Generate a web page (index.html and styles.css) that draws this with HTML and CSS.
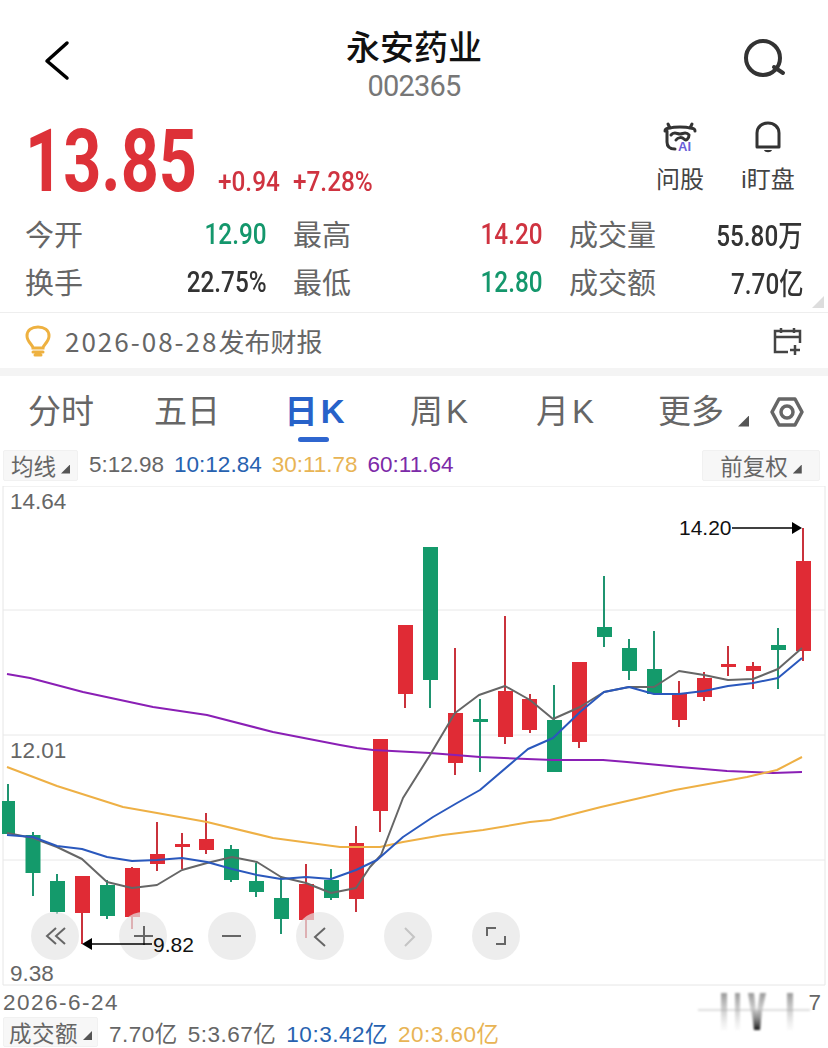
FILE: index.html
```html
<!DOCTYPE html>
<html lang="zh-CN">
<head>
    <meta charset="UTF-8">
    <meta name="viewport" content="width=device-width, initial-scale=1.0">
    <title>永安药业 002365</title>
    <link rel="stylesheet" href="styles.css">
</head>
<body>
    <!-- Top bar -->
    <header class="nav">
        <svg class="nav-icon" width="40" height="50" viewBox="0 0 40 50"><path class="ic-back" d="M27 8L7 26L27 43"/></svg>
        <div class="nav-title">
            <div class="stock-name">永安药业</div>
            <div class="stock-code">002365</div>
        </div>
        <svg class="nav-icon" width="44" height="44" viewBox="0 0 44 44"><circle class="ic-search" cx="20" cy="20" r="17"/><path class="ic-search" d="M31 29L40 35"/></svg>
    </header>

    <!-- Price -->
    <section class="quote">
        <div class="price">13.85</div>
        <div class="change change-abs">+0.94</div>
        <div class="change">+7.28%</div>
        <div class="quote-tools">
            <div class="tool">
                <svg width="36" height="34" viewBox="0 0 36 34">
                    <path class="ic-cow" d="M8 8C12 6.500 24 6.500 28 8M6 4L8 8M30 4L28 8M3 11C3 8 6 8 8 8M33 11C33 8 30 8 28 8M5 11V22C5 27 8 29 13 29"/>
                    <path class="ic-cow" d="M9 15C12 11 15 14 18 14C21 14 24 11 27 15C27 19 24 21 22 19C20 17 16 17 14 20"/>
                    <text class="ic-ai" x="16" y="31">AI</text>
                </svg>
                <span class="tool-label">问股</span>
            </div>
            <div class="tool">
                <svg width="36" height="34" viewBox="0 0 36 34">
                    <path class="ic-bell" d="M7 27V13C7 7 12 3 18 3C24 3 29 7 29 13V27Z"/>
                    <path class="ic-clapper" d="M14 30H22C21 33 15 33 14 30Z"/>
                </svg>
                <span class="tool-label">i盯盘</span>
            </div>
        </div>
    </section>

    <!-- Stats grid -->
    <section class="stats">
        <div class="stat"><span class="stat-label">今开</span><span class="stat-value green">12.90</span></div>
        <div class="stat"><span class="stat-label">最高</span><span class="stat-value red">14.20</span></div>
        <div class="stat"><span class="stat-label">成交量</span><span class="stat-value">55.80万</span></div>
        <div class="stat"><span class="stat-label">换手</span><span class="stat-value">22.75%</span></div>
        <div class="stat"><span class="stat-label">最低</span><span class="stat-value green">12.80</span></div>
        <div class="stat"><span class="stat-label">成交额</span><span class="stat-value">7.70亿</span></div>
        <i class="corner corner-stats"></i>
    </section>

    <!-- Earnings notice -->
    <section class="notice">
        <svg width="28" height="32" viewBox="0 0 28 32">
            <path class="ic-bulb" d="M9 23C9 20 3 17 3 11C3 5 8 2 14 2C20 2 25 5 25 11C25 17 19 20 19 23Z"/>
            <path class="ic-bulb" d="M9 27H19M11 30H17"/>
        </svg>
        <span class="notice-text"><span class="notice-date">2026-08-28</span>发布财报</span>
        <svg class="notice-cal" width="30" height="30" viewBox="0 0 30 30">
            <path class="ic-cal" d="M16 26H3V5H28V17M3 11H28M9 2V7M22 2V7M18 24H28M23 19V29"/>
        </svg>
    </section>

    <div class="band"></div>

    <!-- Period tabs -->
    <nav class="tabs">
        <div class="tab-list">
            <div class="tab">分时</div>
            <div class="tab">五日</div>
            <div class="tab active">日 K</div>
            <div class="tab">周 K</div>
            <div class="tab">月 K</div>
            <div class="tab">更多<i class="corner corner-tab"></i></div>
        </div>
        <svg width="34" height="30" viewBox="0 0 34 30">
            <path class="ic-hex" d="M9 2H25L32 15L25 28H9L2 15Z"/>
            <circle class="ic-hex" cx="17" cy="15" r="6"/>
        </svg>
    </nav>

    <!-- Moving average legend -->
    <div class="legend">
        <div class="tag">均线<i class="corner"></i></div>
        <span class="ma ma5">5:12.98</span>
        <span class="ma ma10">10:12.84</span>
        <span class="ma ma30">30:11.78</span>
        <span class="ma ma60">60:11.64</span>
        <div class="tag tag-right">前复权<i class="corner"></i></div>
    </div>

    <!-- K line chart, coordinates in the viewBox are page pixels -->
    <svg class="chart" width="828" height="500" viewBox="0 486 828 500">
        <path class="frame" d="M3 486H825V985H3Z"/>
        <path class="grid" d="M3 610H825M3 735H825M3 860H825"/>

        <g class="k-green"><path d="M8 784V801"/><rect x="2" y="801" width="13" height="33"/></g>
        <g class="k-green"><path d="M33 832V896"/><rect x="25.500" y="835" width="15" height="38"/></g>
        <g class="k-green"><path d="M57 874V914"/><rect x="50" y="881" width="15" height="31"/></g>
        <g class="k-red"><path d="M82 876V944"/><rect x="75" y="876" width="15" height="37"/></g>
        <g class="k-green"><path d="M107 880V919"/><rect x="100" y="885" width="15" height="31"/></g>
        <g class="k-red"><path d="M132 867V929"/><rect x="125" y="868" width="15" height="49"/></g>
        <g class="k-red"><path d="M157 822V871"/><rect x="150" y="854" width="15" height="10"/></g>
        <g class="k-red"><path d="M182 833V869"/><rect x="175" y="844" width="15" height="3"/></g>
        <g class="k-red"><path d="M206 813V854"/><rect x="199" y="839" width="15" height="11"/></g>
        <g class="k-green"><path d="M231 845V882"/><rect x="224" y="849" width="15" height="31"/></g>
        <g class="k-green"><path d="M256 863V897"/><rect x="249" y="881" width="15" height="11"/></g>
        <g class="k-green"><path d="M281 876V934"/><rect x="274" y="898" width="15" height="21"/></g>
        <g class="k-red"><path d="M306 864V938"/><rect x="299" y="884" width="15" height="36"/></g>
        <g class="k-green"><path d="M331 869V900"/><rect x="324" y="880" width="15" height="18"/></g>
        <g class="k-red"><path d="M356 826V912"/><rect x="349" y="843" width="15" height="56"/></g>
        <g class="k-red"><path d="M380 739V832"/><rect x="373" y="739" width="15" height="72"/></g>
        <g class="k-red"><path d="M405 625V708"/><rect x="398" y="625" width="15" height="69"/></g>
        <g class="k-green"><path d="M430 547V708"/><rect x="423" y="547" width="15" height="133"/></g>
        <g class="k-red"><path d="M455 648V775"/><rect x="448" y="713" width="15" height="50"/></g>
        <g class="k-green"><path d="M480 699V772"/><rect x="473" y="719" width="15" height="3"/></g>
        <g class="k-red"><path d="M505 616V744"/><rect x="498" y="691" width="15" height="46"/></g>
        <g class="k-red"><path d="M530 694V733"/><rect x="522" y="699" width="15" height="31"/></g>
        <g class="k-green"><path d="M554 685V772"/><rect x="547" y="720" width="15" height="52"/></g>
        <g class="k-red"><path d="M579 662V748"/><rect x="572" y="662" width="15" height="80"/></g>
        <g class="k-green"><path d="M604 576V647"/><rect x="597" y="627" width="15" height="10"/></g>
        <g class="k-green"><path d="M629 639V680"/><rect x="622" y="648" width="15" height="23"/></g>
        <g class="k-green"><path d="M654 631V694"/><rect x="647" y="669" width="15" height="25"/></g>
        <g class="k-red"><path d="M679 681V727"/><rect x="672" y="693" width="15" height="27"/></g>
        <g class="k-red"><path d="M704 672V701"/><rect x="697" y="678" width="15" height="19"/></g>
        <g class="k-red"><path d="M728 646V676"/><rect x="721" y="664" width="15" height="3"/></g>
        <g class="k-red"><path d="M753 662V689"/><rect x="746" y="666" width="15" height="5"/></g>
        <g class="k-green"><path d="M778 628V689"/><rect x="771" y="645" width="15" height="5"/></g>
        <g class="k-red"><path d="M803 528V661"/><rect x="796" y="561" width="15" height="90"/></g>

        <polyline class="line line-60" points="7,674 30,678 83,692 153,707 207,715 273,732 340,745 357,748 373,750 430,753 480,757 553,760 603,760 627,762 680,767 727,771 773,773 802,772"/>
        <polyline class="line line-30" points="7,767 57,786 123,807 157,813 207,822 273,838 340,847 356,847 380,847 403,842 443,835 483,830 530,822 550,820 601,807 675,790 747,777 777,770 802,757"/>
        <polyline class="line line-5" points="7,833 33,838 57,847 82,859 107,882 132,888 157,885 182,870 207,863 232,857 257,862 281,877 306,883 331,893 356,888 370,867 381,855 403,798 430,755 455,713 479,695 505,686 530,700 553,719 580,707 604,692 629,687 654,687 679,671 704,675 728,680 753,679 778,669 802,648"/>
        <polyline class="line line-10" points="7,835 33,837 57,846 82,849 107,857 132,861 157,860 182,858 207,862 232,869 257,875 281,879 306,877 331,879 356,870 377,860 403,837 433,817 457,803 480,790 528,749 553,738 580,712 604,692 629,687 654,694 679,694 704,691 728,686 753,683 778,678 802,658"/>

        <text class="axis" x="10" y="509">14.64</text>
        <text class="axis" x="10" y="758">12.01</text>
        <text class="axis" x="10" y="981">9.38</text>

        <!-- zoom and pan buttons -->
        <circle class="pad" cx="55" cy="936" r="24"/>
        <circle class="pad" cx="143" cy="936" r="24"/>
        <circle class="pad" cx="232" cy="936" r="24"/>
        <circle class="pad" cx="320" cy="936" r="24"/>
        <circle class="pad" cx="408" cy="936" r="24"/>
        <circle class="pad" cx="496" cy="936" r="24"/>
        <path class="pad-ic" d="M56 928L47 936L56 944M65 928L56 936L65 944"/>
        <path class="pad-ic" d="M134 936H153M144 926V945"/>
        <path class="pad-ic" d="M222 936H241"/>
        <path class="pad-ic" d="M325 928L315 937L325 946"/>
        <path class="pad-ic pad-off" d="M405 928L414 937L405 946"/>
        <path class="pad-ic" d="M487 936V928H496M505 936V944H496"/>

        <text class="mark" x="679" y="535">14.20</text>
        <path class="mark-line" d="M732 528H794"/>
        <path class="mark-head" d="M802 528L792 522V534Z"/>
        <path class="mark-line" d="M90 944H152"/>
        <path class="mark-head" d="M82 944L92 938V950Z"/>
        <text class="mark" x="153" y="952">9.82</text>
    </svg>

    <div class="dates">
        <span class="date-first">2026-6-24</span>
        <span>7</span>
    </div>

    <div class="legend legend-vol">
        <div class="tag tag-vol">成交额<i class="corner"></i></div>
        <span class="ma ma5">7.70亿</span>
        <span class="ma ma5">5:3.67亿</span>
        <span class="ma ma10">10:3.42亿</span>
        <span class="ma ma30">20:3.60亿</span>
    </div>

    <!-- smudged watermark in the lower right corner -->
    <svg class="watermark" width="130" height="40" viewBox="0 0 130 40">
        <defs>
            <linearGradient id="wm" x1="0" y1="0" x2="0" y2="1">
                <stop offset="0" stop-color="#777" stop-opacity=".75"/>
                <stop offset=".6" stop-color="#aaa" stop-opacity=".4"/>
                <stop offset="1" stop-color="#ccc" stop-opacity=".1"/>
            </linearGradient>
            <linearGradient id="wm-dark" x1="0" y1="0" x2="0" y2="1">
                <stop offset="0" stop-color="#999" stop-opacity=".5"/>
                <stop offset="1" stop-color="#111"/>
            </linearGradient>
        </defs>
        <rect class="wm-line" x="2" y="16" width="112" height="2"/>
        <rect x="25" y="0" width="6" height="37" fill="url(#wm)"/>
        <rect x="39" y="0" width="5" height="37" fill="url(#wm)"/>
        <path d="M52 0H58L62 37H58Z" fill="url(#wm)"/>
        <path d="M70 0H64L58 37H62Z" fill="url(#wm)"/>
        <path d="M56 18H66L64 37H58Z" fill="url(#wm-dark)"/>
        <rect x="91" y="0" width="6" height="37" fill="url(#wm)"/>
    </svg>
</body>
</html>
```

FILE: styles.css
```css
* {
    box-sizing: border-box;
}

body {
    position: relative;
    width: 828px;
    height: 1048px;
    margin: 0;
    overflow: hidden;
    background-color: #fff;
    color: #666;
    font-family: "Liberation Sans", "Noto Sans CJK SC", sans-serif;
}

.red {
    color: #cf3340;
}

.green {
    color: #14976c;
}

/* Top bar */
.nav {
    display: flex;
    align-items: center;
    justify-content: space-between;
    height: 110px;
    padding: 22px 41px 0 40px;
}

.nav-icon {
    margin-bottom: 12px;
}

.nav-title {
    text-align: center;
    margin-left: 5px;
}

.stock-name {
    font-size: 34px;
    line-height: 40px;
    font-weight: 500;
    color: #111;
    font-family: "Noto Sans CJK SC", sans-serif;
}

.stock-code {
    font-size: 29px;
    line-height: 40px;
    color: #777;
    font-family: Roboto, sans-serif;
    letter-spacing: -.8px;
}

.ic-back {
    fill: none;
    stroke: #000;
    stroke-width: 3.500;
    stroke-linecap: round;
    stroke-linejoin: round;
}

.ic-search {
    fill: none;
    stroke: #333;
    stroke-width: 4;
    stroke-linecap: round;
}

/* Price */
.quote {
    display: flex;
    align-items: flex-end;
    height: 86px;
    padding: 8px 34px 0 25px;
}

/* No condensed face is installed, so the DIN style numbers are squeezed Roboto */
.price {
    width: 193px;
    margin-bottom: -4px;
    font-size: 87px;
    line-height: 78px;
    font-weight: 700;
    color: #dd3138;
    font-family: Roboto, sans-serif;
    white-space: nowrap;
    transform: scaleX(.765);
    transform-origin: left center;
}

.change {
    font-size: 28px;
    line-height: 28px;
    font-weight: 500;
    color: #cf3340;
    font-family: Roboto, sans-serif;
    white-space: nowrap;
    transform: scaleX(.87);
    transform-origin: left center;
}

.change-abs {
    width: 75px;
}

.quote-tools {
    display: flex;
    gap: 36px;
    margin: 2px 0 0 auto;
    align-self: flex-start;
}

.tool {
    display: flex;
    flex-direction: column;
    align-items: center;
    width: 52px;
    white-space: nowrap;
}

.tool-label {
    font-size: 24px;
    line-height: 32px;
    margin-top: 10px;
    color: #444;
}

.ic-cow {
    fill: none;
    stroke: #333;
    stroke-width: 3;
    stroke-linecap: round;
    stroke-linejoin: round;
}

.ic-ai {
    font-size: 13px;
    font-weight: 700;
    fill: #6a5fd8;
}

.ic-bell {
    fill: none;
    stroke: #333;
    stroke-width: 3;
    stroke-linejoin: round;
}

.ic-clapper {
    fill: #333;
}

/* Stats */
.stats {
    position: relative;
    display: grid;
    grid-template-columns: 242px 250px 234px;
    column-gap: 26px;
    height: 117px;
    padding: 13px 0 0 25px;
    grid-auto-rows: 48px;
    border-bottom: 1px solid #eee;
}

.stat {
    display: flex;
    align-items: center;
    justify-content: space-between;
}

.stat-label {
    font-size: 29px;
    color: #666;
}

.stat-value {
    font-size: 30px;
    font-weight: 500;
    font-family: Roboto, "Noto Sans CJK SC", sans-serif;
    white-space: nowrap;
    transform: scaleX(.81);
    transform-origin: right center;
}

.stat-value:not(.red):not(.green) {
    color: #333;
}

.corner {
    display: inline-block;
    width: 11px;
    height: 11px;
    margin-left: 8px;
    background-color: #555;
    clip-path: polygon(100% 0, 100% 100%, 0 100%);
}

.corner-stats {
    position: absolute;
    right: 4px;
    bottom: 4px;
    width: 12px;
    height: 12px;
    background-color: #ddd;
}

.corner-tab {
    position: absolute;
    right: 5px;
    bottom: 21px;
    margin: 0;
}

/* Notice */
.notice {
    display: flex;
    align-items: center;
    height: 55px;
    padding: 0 26px 0 24px;
}

.notice-text {
    margin-left: 13px;
    font-size: 26px;
    font-family: "Noto Sans CJK SC", sans-serif;
    color: #666;
}

.notice-date {
    letter-spacing: 2px;
}

.notice-cal {
    margin-left: auto;
}

.ic-bulb {
    fill: none;
    stroke: #eeb140;
    stroke-width: 3;
    stroke-linecap: round;
}

.ic-cal {
    fill: none;
    stroke: #444;
    stroke-width: 2.500;
}

.band {
    height: 8px;
    background-color: #f4f4f4;
}

/* Tabs */
.tabs {
    display: flex;
    align-items: center;
    justify-content: space-between;
    height: 72px;
    padding: 0 24px 1px 0;
}

.tab-list {
    display: grid;
    grid-template-columns: repeat(6, 126px);
    margin-left: -2px;
}

.tab {
    position: relative;
    text-align: center;
    font-size: 33px;
    line-height: 72px;
    color: #666;
    white-space: nowrap;
    word-spacing: -6px;
}

.tab.active {
    padding-left: 3px;
    font-weight: 700;
    color: #2762c9;
}

.tab.active::after {
    content: "";
    position: absolute;
    left: 48px;
    bottom: 6px;
    width: 31px;
    height: 5px;
    border-radius: 3px;
    background-color: #2f66cf;
}

.ic-hex {
    fill: none;
    stroke: #666;
    stroke-width: 3.500;
    stroke-linejoin: round;
}

/* Legend */
.legend {
    display: flex;
    align-items: center;
    gap: 10px;
    height: 38px;
    padding: 0 8px 4px 3px;
    font-size: 22.500px;
}

.tag {
    display: flex;
    align-items: center;
    justify-content: center;
    width: 75px;
    height: 31px;
    margin-right: 1px;
    background-color: #f7f7f7;
    border: 1px solid #f1f1f1;
    border-radius: 2px;
    color: #666;
}

.tag .corner {
    align-self: flex-end;
    margin: 0 0 6px 5px;
    width: 9px;
    height: 9px;
}

.tag-right {
    width: 118px;
    margin: 0 0 0 auto;
}

.ma5 {
    color: #666;
}

.ma10 {
    color: #2762b0;
}

.ma30 {
    color: #e8b455;
}

.ma60 {
    color: #7c2aa8;
}

/* Chart */
.chart {
    display: block;
}

.frame {
    fill: none;
    stroke: #e6e6e6;
    stroke-width: 1;
}

.grid {
    fill: none;
    stroke: #e8e8e8;
    stroke-width: 1;
}

.k-red {
    fill: #e02b35;
    stroke: none;
}

.k-red path {
    stroke: #c9323c;
    stroke-width: 2;
}

.k-green {
    fill: #149a6b;
}

.k-green path {
    stroke: #1f9470;
    stroke-width: 2;
}

.line {
    fill: none;
    stroke-width: 2;
    stroke-linejoin: round;
}

.line-5 {
    stroke: #666;
}

.line-10 {
    stroke: #2a58bd;
}

.line-30 {
    stroke: #eeb045;
}

.line-60 {
    stroke: #8a1fb5;
}

.axis {
    font-size: 22.500px;
    fill: #666;
}

.mark {
    font-size: 21px;
    fill: #111;
}

.mark-line {
    fill: none;
    stroke: #000;
    stroke-width: 1.500;
}

.mark-head {
    fill: #000;
}

.pad {
    fill: #e6e6e6;
    fill-opacity: .7;
}

.pad-ic {
    fill: none;
    stroke: #666;
    stroke-width: 2;
}

.pad-off {
    stroke: #c4c4c4;
}

/* Bottom rows */
.dates {
    display: flex;
    justify-content: space-between;
    height: 31px;
    padding: 4px 7px 0 3px;
    font-size: 22.500px;
    line-height: 26px;
}

.date-first {
    letter-spacing: 1.500px;
}

.legend-vol {
    height: 30px;
    padding-bottom: 0;
    letter-spacing: .5px;
}

.tag-vol {
    width: 95px;
    height: 30px;
    margin-right: 1px;
}

.watermark {
    position: absolute;
    left: 696px;
    top: 993px;
    filter: blur(.8px);
}

.wm-line {
    fill: #ddd;
}
```
